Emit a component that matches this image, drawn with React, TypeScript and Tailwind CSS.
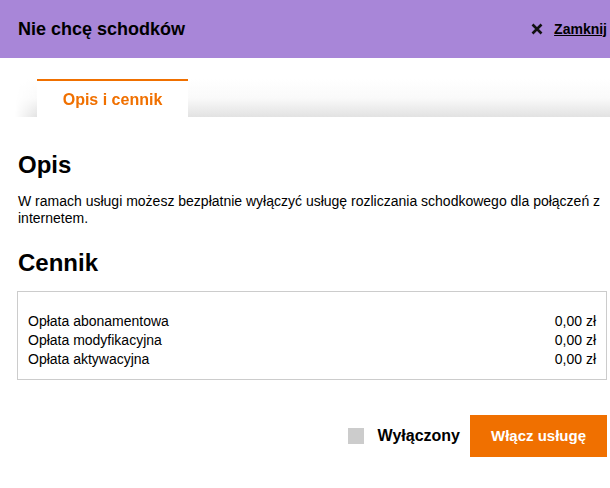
export default function App() {
  const fees = [
    ["Opłata abonamentowa", "0,00 zł"],
    ["Opłata modyfikacyjna", "0,00 zł"],
    ["Opłata aktywacyjna", "0,00 zł"],
  ]

  return (
    <div className="w-[610px] h-[488px] bg-white overflow-hidden [font-family:'Liberation_Sans',Arial,sans-serif] text-black">
      <header className="h-[58px] bg-[#a886d8] flex items-center justify-between pl-[18px] pr-[3px]">
        <h1 className="text-[18px] font-bold">Nie chcę schodków</h1>
        <a href="#" className="flex items-center gap-[11px] text-[14px] font-bold underline">
          <svg width="12" height="12" viewBox="0 0 12 12">
            <path d="M1.5 1.5 L10.5 10.5 M10.5 1.5 L1.5 10.5" stroke="#111" strokeWidth="2.6" />
          </svg>
          Zamknij
        </a>
      </header>

      <div className="pt-[22px] pl-[15px]">
        <div className="h-[38px] bg-gradient-to-b from-white via-[#fafafa] to-[#e2e2e2] pl-[22px] [mask-image:linear-gradient(to_right,transparent,black_22px)]">
          <div className="w-[151px] h-[39px] -mt-[1px] bg-white border-t-2 border-[#f07000] flex items-center justify-center text-[16px] font-bold text-[#f07000]">
            Opis i cennik
          </div>
        </div>
      </div>

      <main className="pl-[18px] pr-[3px]">
        <h2 className="text-[24px] font-bold mt-[34px] leading-[28px]">Opis</h2>
        <p className="text-[14px] leading-[17px] mt-[14px]">
          W ramach usługi możesz bezpłatnie wyłączyć usługę rozliczania schodkowego dla połączeń z internetem.
        </p>
        <h2 className="text-[24px] font-bold mt-[22px] leading-[28px]">Cennik</h2>
        <div className="-ml-px mt-[14px] border border-[#cccccc] pt-[20px] pb-[10px] pl-[10px] pr-[10px]">
          {fees.map(([name, price]) => (
            <div key={name} className="flex justify-between text-[14px] leading-[19px]">
              <span>{name}</span>
              <span>{price}</span>
            </div>
          ))}
        </div>

        <div className="flex items-center justify-end mt-[35px]">
          <span className="w-[16px] h-[16px] bg-[#cccccc]" />
          <span className="ml-[14px] text-[16px] font-bold">Wyłączony</span>
          <button className="ml-[10px] w-[137px] h-[42px] bg-[#f07000] text-white text-[15px] font-bold">
            Włącz usługę
          </button>
        </div>
      </main>
    </div>
  )
}
